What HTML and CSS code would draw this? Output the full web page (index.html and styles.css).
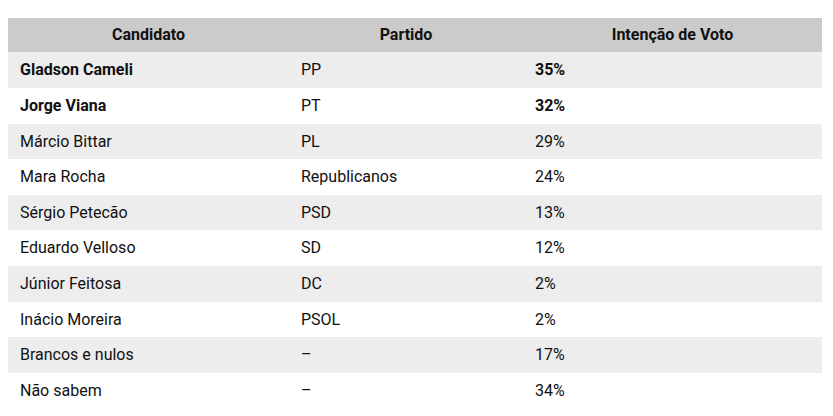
FILE: index.html
```html
<!DOCTYPE html>
<html lang="pt-BR">
<head>
<meta charset="utf-8">
<title>Pesquisa</title>
<link rel="stylesheet" href="styles.css">
</head>
<body>
<table class="poll">
  <colgroup>
    <col class="c1"><col class="c2"><col class="c3">
  </colgroup>
  <thead>
    <tr><th>Candidato</th><th>Partido</th><th>Intenção de Voto</th></tr>
  </thead>
  <tbody>
    <tr class="lead"><td class="name">Gladson Cameli</td><td>PP</td><td class="pct">35%</td></tr>
    <tr class="lead"><td class="name">Jorge Viana</td><td>PT</td><td class="pct">32%</td></tr>
    <tr><td class="name">Márcio Bittar</td><td>PL</td><td class="pct">29%</td></tr>
    <tr><td class="name">Mara Rocha</td><td>Republicanos</td><td class="pct">24%</td></tr>
    <tr><td class="name">Sérgio Petecão</td><td>PSD</td><td class="pct">13%</td></tr>
    <tr><td class="name">Eduardo Velloso</td><td>SD</td><td class="pct">12%</td></tr>
    <tr><td class="name">Júnior Feitosa</td><td>DC</td><td class="pct">2%</td></tr>
    <tr><td class="name">Inácio Moreira</td><td>PSOL</td><td class="pct">2%</td></tr>
    <tr><td class="name">Brancos e nulos</td><td>–</td><td class="pct">17%</td></tr>
    <tr><td class="name">Não sabem</td><td>–</td><td class="pct">34%</td></tr>
  </tbody>
</table>
</body>
</html>
```
FILE: styles.css
```css
body {
  margin: 0;
  padding: 18px 8px 0 8px;
  background: #ffffff;
  font-family: Roboto, "Liberation Sans", sans-serif;
  font-size: 16px;
  color: #111111;
}
.poll {
  width: 814px;
  border-collapse: collapse;
  table-layout: fixed;
}
.c1 { width: 281px; }
.c2 { width: 234px; }
.c3 { width: 299px; }
.poll th, .poll td {
  padding: 5px 12px;
  line-height: 1.6;
  text-align: left;
}
.poll th {
  padding: 4.4px 12px;
  background: #cbcbcb;
  font-weight: 700;
  text-align: center;
}
.poll tbody tr:nth-child(odd) { background: #ededed; }
.poll tbody tr:nth-child(even) { background: #ffffff; }
.poll tr.lead .name,
.poll tr.lead .pct { font-weight: 700; }
```
